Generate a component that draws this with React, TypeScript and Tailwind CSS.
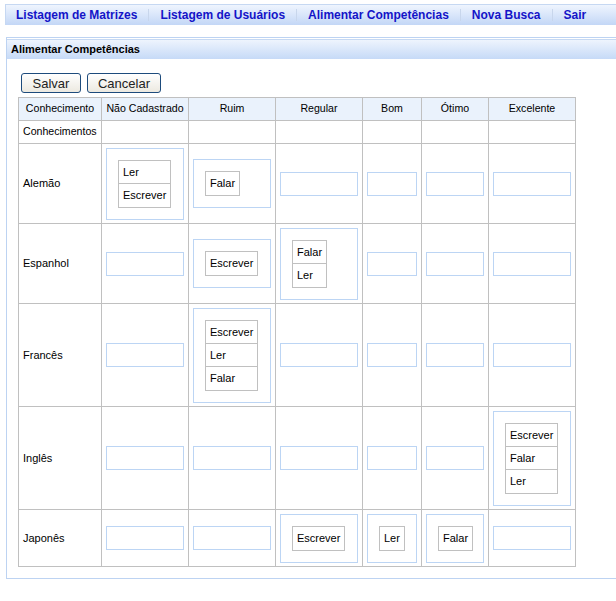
import React from 'react';

type Level = 'nc' | 'ruim' | 'regular' | 'bom' | 'otimo' | 'excelente';

interface Row {
  name: string;
  cells: Record<Level, string[]>;
}

const levels: { key: Level; label: string }[] = [
  { key: 'nc', label: 'Não Cadastrado' },
  { key: 'ruim', label: 'Ruim' },
  { key: 'regular', label: 'Regular' },
  { key: 'bom', label: 'Bom' },
  { key: 'otimo', label: 'Ótimo' },
  { key: 'excelente', label: 'Excelente' },
];

const rows: Row[] = [
  {
    name: 'Alemão',
    cells: { nc: ['Ler', 'Escrever'], ruim: ['Falar'], regular: [], bom: [], otimo: [], excelente: [] },
  },
  {
    name: 'Espanhol',
    cells: { nc: [], ruim: ['Escrever'], regular: ['Falar', 'Ler'], bom: [], otimo: [], excelente: [] },
  },
  {
    name: 'Francês',
    cells: { nc: [], ruim: ['Escrever', 'Ler', 'Falar'], regular: [], bom: [], otimo: [], excelente: [] },
  },
  {
    name: 'Inglês',
    cells: { nc: [], ruim: [], regular: [], bom: [], otimo: [], excelente: ['Escrever', 'Falar', 'Ler'] },
  },
  {
    name: 'Japonês',
    cells: { nc: [], ruim: [], regular: ['Escrever'], bom: ['Ler'], otimo: ['Falar'], excelente: [] },
  },
];

const menu = ['Listagem de Matrizes', 'Listagem de Usuários', 'Alimentar Competências', 'Nova Busca', 'Sair'];

const DropZone: React.FC<{ items: string[] }> = ({ items }) => {
  if (items.length === 0) {
    return <div className="w-full h-[24px] border border-[#bcd5f4] bg-white" />;
  }
  return (
    <div className="w-full border border-[#bcd5f4] p-[11px]">
      <div className="w-max flex flex-col border border-[#c0c0c0] divide-y divide-[#c0c0c0] bg-white">
        {items.map((item) => (
          <div key={item} className="h-[23px] leading-[22px] px-[4px] text-[11px] text-black">
            {item}
          </div>
        ))}
      </div>
    </div>
  );
};

const App: React.FC = () => {
  return (
    <div className="w-[616px] h-[601px] bg-white overflow-hidden font-['Liberation_Sans',Arial,sans-serif]">
      {/* top menu */}
      <div className="pt-[4px] pl-[5px]">
        <div className="h-[21px] w-[640px] border-t border-l border-[#c6d8f2] bg-gradient-to-b from-[#eff5fe] to-[#c3d7f6] flex items-center pl-[10px]">
          {menu.map((item, i) => (
            <React.Fragment key={item}>
              {i > 0 && <span className="mx-[11px] w-px h-[12px] bg-[#c8d6ec]" />}
              <a className="text-[12px] font-bold text-[#1414c8] leading-none whitespace-nowrap cursor-pointer">{item}</a>
            </React.Fragment>
          ))}
        </div>
      </div>

      {/* panel */}
      <div className="mt-[12px] ml-[6px] w-[640px] border border-[#bdd3f2] pt-px">
        <div className="h-[20px] border-t border-[#c6d9f3] bg-gradient-to-b from-[#eef4fd] to-[#c6daf7] flex items-center pl-[4px]">
          <span className="text-[11px] font-bold text-black">Alimentar Competências</span>
        </div>

        <div className="pl-[11px] pt-[14px] pb-[11px]">
          <div className="flex gap-[6px] ml-[3px]">
            <button className="w-[60px] h-[20px] rounded-[3px] border border-[#1d4b7c] bg-gradient-to-b from-white to-[#ece9e0] text-[13px] text-[#222] leading-none">
              Salvar
            </button>
            <button className="w-[74px] h-[20px] rounded-[3px] border border-[#1d4b7c] bg-gradient-to-b from-white to-[#ece9e0] text-[13px] text-[#222] leading-none">
              Cancelar
            </button>
          </div>

          <div className="mt-[4px] w-max grid grid-cols-[82px_86px_86px_86px_58px_66px_86px] grid-rows-[22px_22px_79px_79px_102px_102px_56px] gap-px p-px bg-[#c0c0c0] text-[11px] text-black">
            <div className="bg-[#eaf2fc] flex items-center justify-center text-[10.6px]">Conhecimento</div>
            {levels.map((l) => (
              <div key={l.key} className="bg-[#eaf2fc] flex items-center justify-center text-[10.6px]">
                {l.label}
              </div>
            ))}

            <div className="bg-white flex items-center pl-[4px] text-[10.6px]">Conhecimentos</div>
            {levels.map((l) => (
              <div key={l.key} className="bg-white" />
            ))}

            {rows.map((row) => (
              <React.Fragment key={row.name}>
                <div className="bg-white flex items-center pl-[4px]">{row.name}</div>
                {levels.map((l) => (
                  <div key={l.key} className="bg-white flex items-center p-[4px]">
                    <DropZone items={row.cells[l.key]} />
                  </div>
                ))}
              </React.Fragment>
            ))}
          </div>
        </div>
      </div>
    </div>
  );
};

export default App;
